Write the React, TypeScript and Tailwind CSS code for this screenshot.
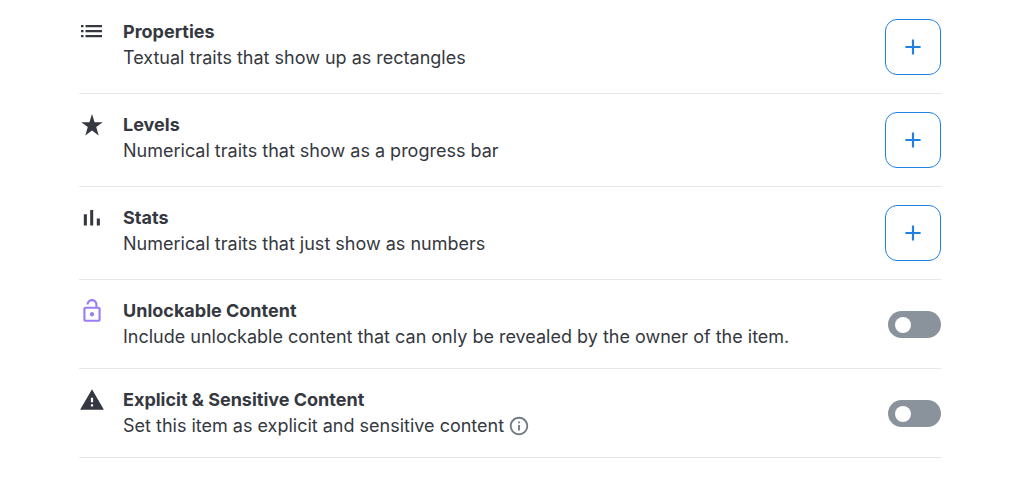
import type { ReactNode } from "react";
import { MdAdd, MdInfoOutline, MdLockOpen, MdWarning } from "react-icons/md";

const ListIcon = () => (
  <svg className="size-[26px]" viewBox="0 0 26 26" fill="currentColor">
    <path d="M2 6h2.5v2.3H2zM2 11h2.5v2.3H2zM2 16h2.5v2.3H2zM6.5 6H23v2.3H6.5zM6.5 11H23v2.3H6.5zM6.5 16H23v2.3H6.5z" />
  </svg>
);

const StarIcon = () => (
  <svg className="size-[26px]" viewBox="0 0 26 26" fill="currentColor">
    <path d="M13 2l2.6 8.2h8.1l-6.5 4.9 2.5 8.4L13 18.4l-6.7 5.1 2.5-8.4-6.5-4.9h8.1z" />
  </svg>
);

const BarsIcon = () => (
  <svg className="size-[26px]" viewBox="0 0 26 26" fill="currentColor">
    <path d="M4.8 9.3h3.1v11.3H4.8zM11.2 5h3v15.6h-3zM17.8 13.5h3.1v7.1h-3.1z" />
  </svg>
);

type RowProps = {
  icon: ReactNode;
  title: string;
  description: ReactNode;
  action: ReactNode;
};

const Row = ({ icon, title, description, action }: RowProps) => (
  <li className="flex items-center justify-between border-b border-[#e5e8eb] py-[18px]">
    <div className="flex min-w-0 gap-[18px] self-start">
      <span className="shrink-0">{icon}</span>
      <div className="text-lg leading-[26px]">
        <h3 className="font-bold">{title}</h3>
        <p className="flex items-center">{description}</p>
      </div>
    </div>
    {action}
  </li>
);

const AddButton = ({ label }: { label: string }) => (
  <button
    type="button"
    aria-label={label}
    className="flex size-14 shrink-0 items-center justify-center rounded-xl border border-[#2081e2] text-[#2081e2]"
  >
    <MdAdd className="size-[26px]" />
  </button>
);

const Toggle = ({ label }: { label: string }) => (
  <label className="relative flex shrink-0 cursor-pointer">
    <input
      type="checkbox"
      aria-label={label}
      className="peer h-[27px] w-[53px] appearance-none rounded-full bg-[#8a939b] checked:bg-[#2081e2]"
    />
    <span className="pointer-events-none absolute top-1.5 left-[7px] size-4 rounded-full bg-white peer-checked:translate-x-6" />
  </label>
);

export default function App() {
  return (
    <main className="bg-white pt-px pr-[83px] pl-[79px] font-['Inter',sans-serif] text-[#353840]">
      <ul>
        <Row
          icon={<ListIcon />}
          title="Properties"
          description="Textual traits that show up as rectangles"
          action={<AddButton label="Add properties" />}
        />
        <Row
          icon={<StarIcon />}
          title="Levels"
          description="Numerical traits that show as a progress bar"
          action={<AddButton label="Add levels" />}
        />
        <Row
          icon={<BarsIcon />}
          title="Stats"
          description="Numerical traits that just show as numbers"
          action={<AddButton label="Add stats" />}
        />
        <Row
          icon={<MdLockOpen className="size-[26px] text-[#9b7df5]" />}
          title="Unlockable Content"
          description="Include unlockable content that can only be revealed by the owner of the item."
          action={<Toggle label="Unlockable Content" />}
        />
        <Row
          icon={<MdWarning className="size-[26px]" />}
          title="Explicit & Sensitive Content"
          description={
            <>
              Set this item as explicit and sensitive content
              <MdInfoOutline className="ml-1 size-[22px] text-[#707a83]" />
            </>
          }
          action={<Toggle label="Explicit & Sensitive Content" />}
        />
      </ul>
    </main>
  );
}
